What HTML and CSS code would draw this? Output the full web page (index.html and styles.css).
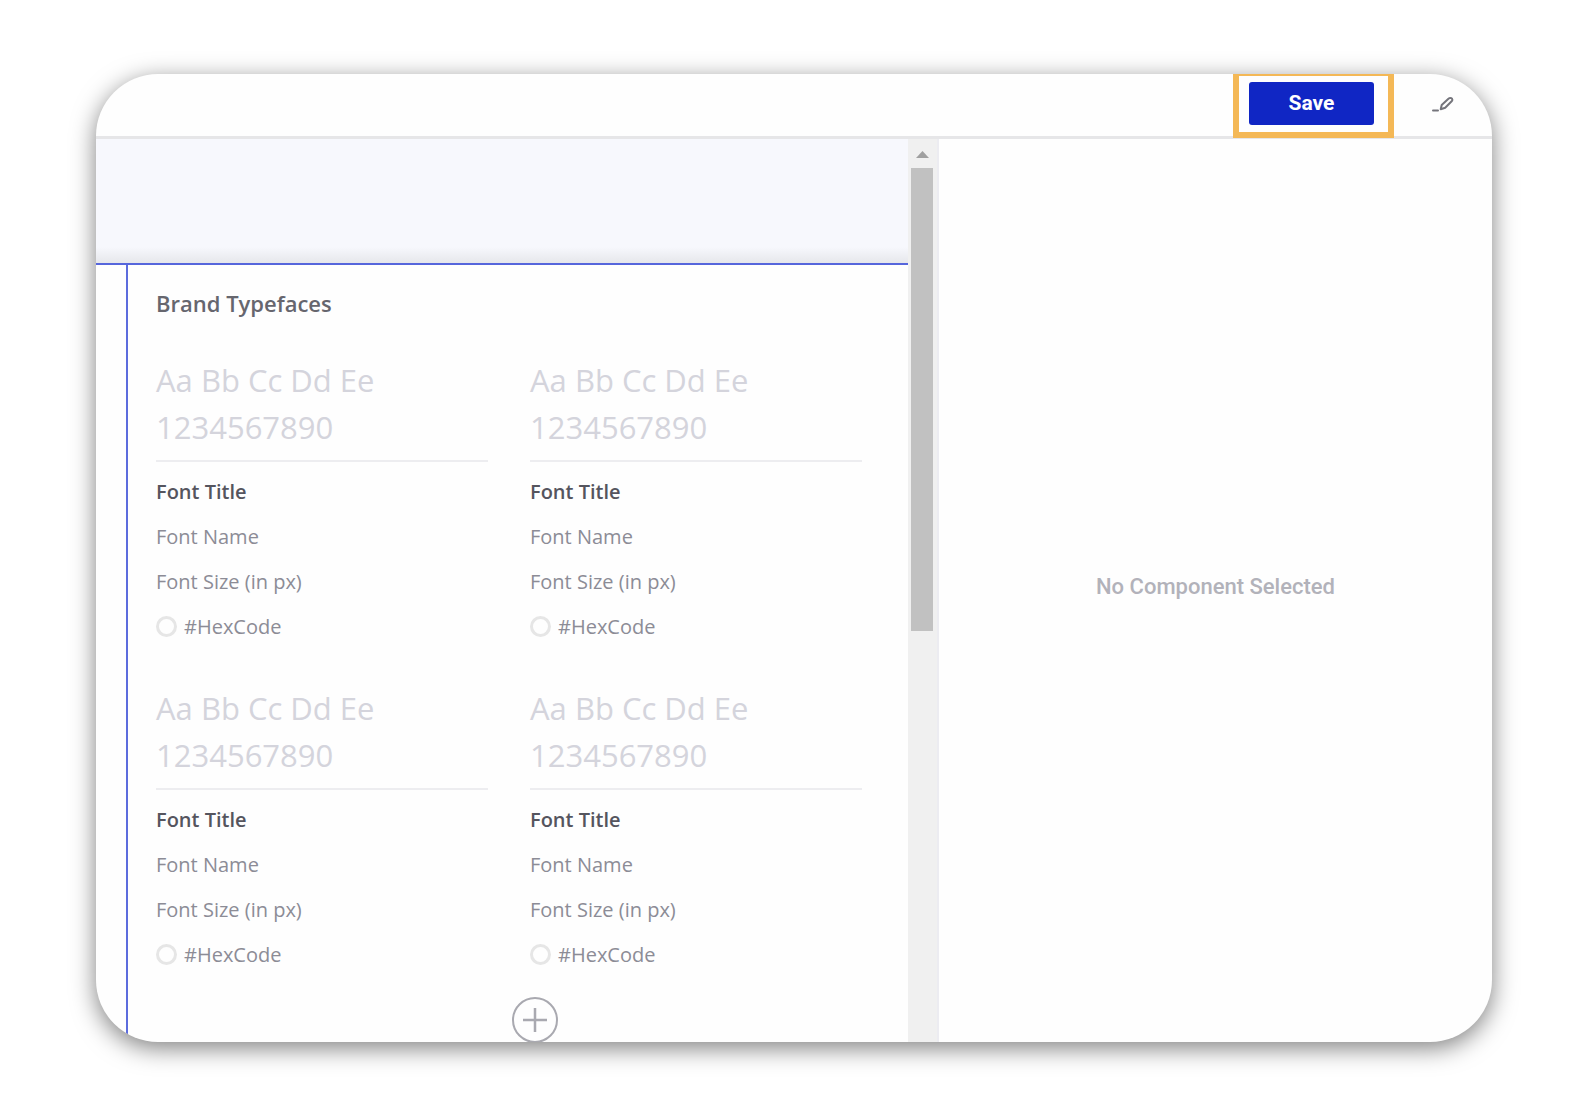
FILE: index.html
```html
<!DOCTYPE html>
<html lang="en">
<head>
<meta charset="utf-8">
<meta name="viewport" content="width=device-width, initial-scale=1">
<title>Brand Typefaces</title>
<link rel="stylesheet" href="styles.css">
</head>
<body>
<div class="window">
  <header class="toolbar">
    <div class="highlight"><button class="save" type="button">Save</button></div>
    <button class="edit" type="button" aria-label="Edit">
      <svg width="24" height="20" viewBox="0 0 24 20" fill="none" stroke="#75757c" stroke-width="2" stroke-linecap="round" stroke-linejoin="round">
        <path d="M2 16.500h5"/>
        <path d="M9.700 15.300l1-4.200 7-6.600q1.200-1 2.500-.3 1.900 1.100.7 2.800l-6.700 6.800z"/>
      </svg>
    </button>
  </header>
  <div class="workspace">
    <main class="canvas">
      <div class="band"></div>
      <div class="sheet">
        <section class="typefaces">
          <h1 class="heading">Brand Typefaces</h1>
          <div class="grid">
            <article class="face">
              <p class="sample">Aa Bb Cc Dd Ee<br>1234567890</p>
              <h2 class="title">Font Title</h2>
              <p class="line">Font Name</p>
              <p class="line">Font Size (in px)</p>
              <label class="line hex"><input class="swatch" type="radio" name="hex">#HexCode</label>
            </article>
            <article class="face">
              <p class="sample">Aa Bb Cc Dd Ee<br>1234567890</p>
              <h2 class="title">Font Title</h2>
              <p class="line">Font Name</p>
              <p class="line">Font Size (in px)</p>
              <label class="line hex"><input class="swatch" type="radio" name="hex">#HexCode</label>
            </article>
            <article class="face">
              <p class="sample">Aa Bb Cc Dd Ee<br>1234567890</p>
              <h2 class="title">Font Title</h2>
              <p class="line">Font Name</p>
              <p class="line">Font Size (in px)</p>
              <label class="line hex"><input class="swatch" type="radio" name="hex">#HexCode</label>
            </article>
            <article class="face">
              <p class="sample">Aa Bb Cc Dd Ee<br>1234567890</p>
              <h2 class="title">Font Title</h2>
              <p class="line">Font Name</p>
              <p class="line">Font Size (in px)</p>
              <label class="line hex"><input class="swatch" type="radio" name="hex">#HexCode</label>
            </article>
          </div>
          <div class="add-row">
            <button class="add" type="button" aria-label="Add typeface">
              <svg width="46" height="46" viewBox="0 0 46 46" fill="none" stroke="#a9a9b0">
                <circle cx="23" cy="23" r="22" stroke-width="2"/>
                <path d="M23 11v24M11 23h24" stroke-width="2.500"/>
              </svg>
            </button>
          </div>
        </section>
      </div>
    </main>
    <div class="scrollbar" aria-hidden="true">
      <svg class="arrow" width="13" height="7" viewBox="0 0 13 7"><path d="M6.500 0L13 7H0z" fill="#a0a0a0"/></svg>
      <div class="thumb"></div>
    </div>
    <aside class="inspector"><p class="empty">No Component Selected</p></aside>
  </div>
</div>
</body>
</html>
```

FILE: styles.css
```css
* {
  box-sizing: border-box;
}

body {
  margin: 0;
  height: 100vh;
  padding: 74px 92px 72px 96px;
  display: flex;
  background: #fff;
  font-family: "Open Sans", "Noto Sans", sans-serif;
}

h1, h2, p {
  margin: 0;
}

button {
  padding: 0;
  border: 0;
  background: none;
  cursor: pointer;
}

svg {
  display: block;
}

.window {
  flex: 1;
  min-width: 0;
  display: flex;
  flex-direction: column;
  overflow: hidden;
  border-radius: 62px;
  background: #fefefe;
  box-shadow: 0 6px 24px rgba(0, 0, 0, 0.5);
}

.toolbar {
  flex: none;
  height: 65px;
  display: flex;
  justify-content: flex-end;
  align-items: flex-start;
  gap: 37px;
  padding-right: 37px;
  border-bottom: 3px solid #e6e6e8;
}

.highlight {
  height: 64px;
  padding: 6px 14px 0 10px;
  border: 6px solid #f4b856;
  border-top-width: 2px;
}

.save {
  display: block;
  width: 125px;
  height: 43px;
  border-radius: 3px;
  background: #1026c4;
  color: #fff;
  font: 700 21px/43px Roboto, sans-serif;
}

.edit {
  margin-top: 20px;
}

.workspace {
  flex: 1;
  min-height: 0;
  display: flex;
}

.canvas {
  flex: 1;
  min-width: 0;
  overflow: hidden;
}

.band {
  height: 124px;
  background: linear-gradient(#f7f8fd 108px, #e6e7eb);
}

.sheet {
  padding-left: 30px;
  border-top: 2px solid #5666dc;
}

.typefaces {
  padding: 20px 46px 0 28px;
  border-left: 2px solid #5c6cdd;
}

.heading {
  color: #66666e;
  font-size: 22px;
  font-weight: 600;
  line-height: 36px;
}

.grid {
  display: grid;
  grid-template-columns: 1fr 1fr;
  gap: 36px 42px;
  padding-top: 36px;
}

.sample {
  padding-bottom: 9px;
  margin-bottom: 7px;
  border-bottom: 2px solid #ededf0;
  color: #d4d4dc;
  font-size: 31px;
  line-height: 47px;
}

.title,
.line {
  font-size: 20px;
  line-height: 45px;
}

.title {
  color: #55555e;
  font-weight: 600;
}

.line {
  color: #8c8c96;
}

.hex {
  display: flex;
  align-items: center;
  gap: 7px;
}

.swatch {
  appearance: none;
  width: 21px;
  height: 21px;
  margin: 0;
  border: 3px solid #e6e6e6;
  border-radius: 50%;
}

.add-row {
  display: flex;
  justify-content: center;
  padding: 20px 0 40px 52px;
}

.scrollbar {
  flex: none;
  width: 31px;
  padding: 12px 4px 0 3px;
  border-right: 2px solid #ececf1;
  background: #f0f0f0;
}

.arrow {
  margin: 0 auto 10px;
}

.thumb {
  height: 52%;
  background: #c1c1c1;
}

.inspector {
  flex: none;
  width: 553px;
  display: flex;
  align-items: center;
  justify-content: center;
  padding-bottom: 8px;
}

.empty {
  color: #b2b2ba;
  font: 500 22px/28px Roboto, sans-serif;
}
```
